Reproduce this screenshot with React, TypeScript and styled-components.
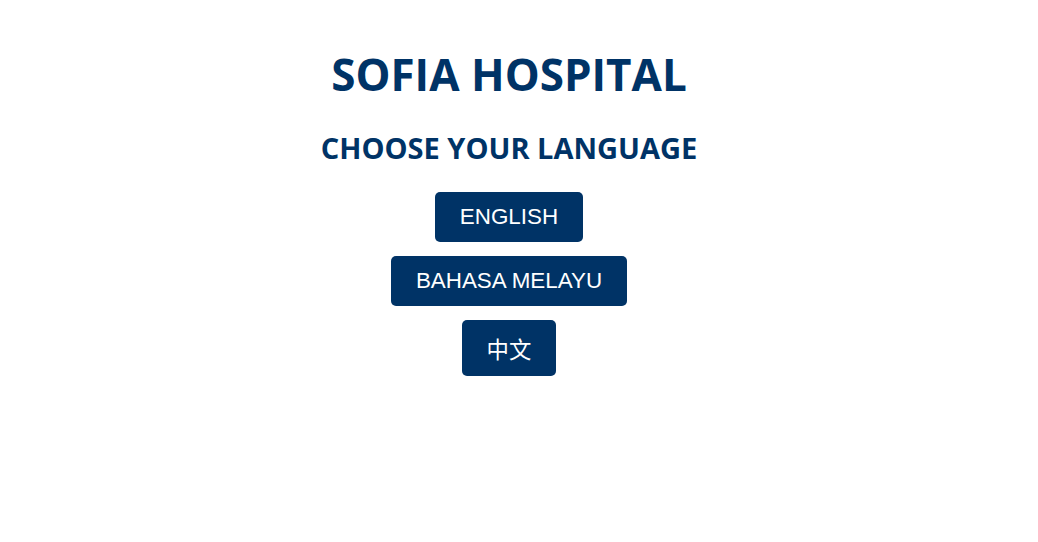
import React from "react";
import styled, { createGlobalStyle } from "styled-components";

const GlobalStyle = createGlobalStyle`
  html, body { margin: 0; padding: 0; background: #ffffff; }
  body { font-family: "Liberation Sans", Arial, sans-serif; }
`;

const Page = styled.main`
  display: flex;
  flex-direction: column;
  align-items: center;
  padding: 46px 20px 0 0;
`;

const Title = styled.h1`
  margin: 0;
  font-family: "Open Sans", "Noto Sans", sans-serif;
  font-weight: 700;
  font-size: 44px;
  line-height: 56px;
  color: #003366;
`;

const Subtitle = styled.h2`
  margin: 28px 0 0;
  font-family: "Open Sans", "Noto Sans", sans-serif;
  font-weight: 700;
  font-size: 29px;
  line-height: 36px;
  color: #003366;
`;

const ButtonList = styled.div`
  display: flex;
  flex-direction: column;
  align-items: center;
  gap: 14px;
  margin-top: 26px;
`;

const LangButton = styled.button`
  font-family: "Liberation Sans", Arial, "Noto Sans CJK SC", sans-serif;
  font-size: 22.4px;
  color: #ffffff;
  background: #003366;
  border: none;
  border-radius: 5px;
  padding: 12px 25px;
  cursor: pointer;
`;

export default function App() {
  return (
    <>
      <GlobalStyle />
      <Page>
        <Title>SOFIA HOSPITAL</Title>
        <Subtitle>CHOOSE YOUR LANGUAGE</Subtitle>
        <ButtonList>
          <LangButton>ENGLISH</LangButton>
          <LangButton>BAHASA MELAYU</LangButton>
          <LangButton>中文</LangButton>
        </ButtonList>
      </Page>
    </>
  );
}
